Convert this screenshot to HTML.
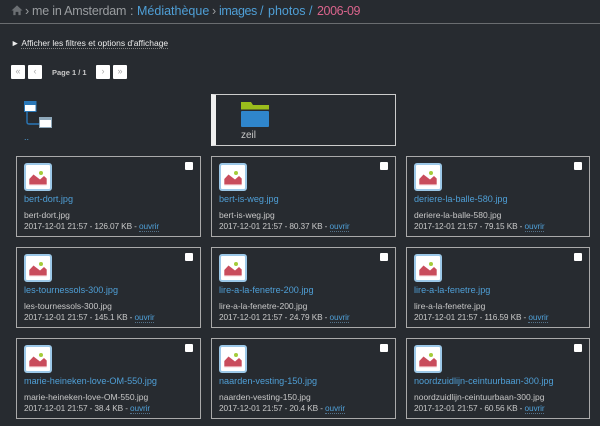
<!DOCTYPE html>
<html><head><meta charset="utf-8"><style>
html,body{margin:0;padding:0;background:#272b30;}
body{width:600px;height:426px;position:relative;overflow:hidden;font-family:"Liberation Sans",sans-serif;color:#c8c8c8;}
.a{position:absolute;white-space:nowrap;}
.h{top:1px;font-size:12.5px;line-height:20px;color:#9a9da0;}
.b{color:#4f9fd6;}
.card{position:absolute;width:183px;height:79px;border:1px solid #aaa;box-sizing:content-box;}
.card svg{position:absolute;left:7px;top:5.5px;}
.cb{position:absolute;left:168px;top:5px;width:8px;height:8px;background:#fff;border-radius:1px;}
.c3 .cb{left:167px;}
.c3{width:182px;}
.t{position:absolute;left:7px;top:36px;font-size:9.1px;line-height:12px;color:#4f9fd6;white-space:nowrap;}
.n{position:absolute;left:7px;top:52px;font-size:8.5px;line-height:12px;color:#c8c8c8;white-space:nowrap;}
.m{position:absolute;left:7px;top:63px;font-size:8.3px;letter-spacing:-.13px;line-height:12px;color:#c8c8c8;white-space:nowrap;}
.m u{color:#4f9fd6;text-decoration:none;border-bottom:1px dotted #55748c;}
.btn{position:absolute;top:65px;width:14px;height:14px;background:#fff;border-radius:1px;color:#aaa;font-size:9px;line-height:13px;text-align:center;}
</style></head><body>
<svg class="a" style="left:11px;top:4px" width="12" height="12" viewBox="0 0 13 12"><path d="M6.5 1L0.5 6.5H2.5V11.5H5V8H8V11.5H10.5V6.5H12.5Z" fill="#6b6f73"/></svg>
<div class="a h" style="left:25px">›</div>
<div class="a h" style="left:32px;letter-spacing:-.2px">me in Amsterdam</div>
<div class="a h" style="left:130px">:</div>
<div class="a h b" style="left:137px">Médiathèque</div>
<div class="a h" style="left:212px">›</div>
<div class="a h b" style="left:219px;letter-spacing:-.4px">images</div>
<div class="a h b" style="left:260px">/</div>
<div class="a h b" style="left:268px">photos</div>
<div class="a h b" style="left:309px">/</div>
<div class="a h" style="left:317px;color:#d9648c;letter-spacing:-.4px">2006-09</div>
<div class="a" style="left:0;top:23px;width:600px;height:1px;background:#6a6d70"></div>
<div class="a" style="left:11px;top:37px;font-size:8.5px;line-height:12px;color:#ececec">► <span style="border-bottom:1px dotted #888">Afficher les filtres et options d'affichage</span></div>
<div class="btn" style="left:11px">«</div><div class="btn" style="left:28px">‹</div>
<div class="a" style="left:52px;top:67px;font-size:7.5px;line-height:12px;font-weight:bold;color:#c8c8c8">Page 1 / 1</div>
<div class="btn" style="left:96px">›</div><div class="btn" style="left:113px">»</div>
<svg class="a" style="left:24px;top:100px" width="30" height="32" viewBox="0 0 30 32">
<path d="M3 12V22Q3 24 5 24H15" stroke="#2a78b8" stroke-width="1.4" fill="none"/>
<rect x="0" y="1" width="12.5" height="11" fill="#2a78b8"/><rect x="1" y="5" width="10.5" height="6" fill="#fff"/>
<rect x="15" y="17" width="13" height="11" fill="#8fa9bb"/><rect x="16" y="20" width="11" height="7" fill="#fff"/>
</svg>
<div class="a" style="left:24px;top:132px;font-size:9px;line-height:10px;color:#4f9fd6">..</div>
<div class="a" style="left:211px;top:94px;width:185px;height:52px;border:1px solid #ccc;border-left:5px solid #efefef;box-sizing:border-box"></div>
<svg class="a" style="left:241px;top:102px" width="28" height="26" viewBox="0 0 28 26"><path d="M0 0H10L12 3H28V7.5H0Z" fill="#9bbd1c"/><rect y="9" width="28" height="16" rx="1" fill="#2f86cc"/></svg>
<div class="a" style="left:241px;top:129px;font-size:10px;line-height:13px;color:#c8c8c8">zeil</div>
<div class="card" style="left:16px;top:156px"><svg width="28" height="28" viewBox="0 0 28 28"><rect x="1" y="1" width="26" height="26" rx="2" fill="#fff" stroke="#9cc8e8" stroke-width="2"/><circle cx="17" cy="10" r="2" fill="#a4cc3a"/><path d="M5.3 21V16L9.5 11.5L16 16.5L20 13L22.7 15.5V21Z" fill="#c94c5c"/><rect x="5.3" y="21" width="17.4" height="1.2" fill="#e8a0a8"/></svg><i class="cb"></i><div class="t">bert-dort.jpg</div><div class="n">bert-dort.jpg</div><div class="m">2017-12-01 21:57 - 126.07 KB - <u>ouvrir</u></div></div>
<div class="card" style="left:211px;top:156px"><svg width="28" height="28" viewBox="0 0 28 28"><rect x="1" y="1" width="26" height="26" rx="2" fill="#fff" stroke="#9cc8e8" stroke-width="2"/><circle cx="17" cy="10" r="2" fill="#a4cc3a"/><path d="M5.3 21V16L9.5 11.5L16 16.5L20 13L22.7 15.5V21Z" fill="#c94c5c"/><rect x="5.3" y="21" width="17.4" height="1.2" fill="#e8a0a8"/></svg><i class="cb"></i><div class="t">bert-is-weg.jpg</div><div class="n">bert-is-weg.jpg</div><div class="m">2017-12-01 21:57 - 80.37 KB - <u>ouvrir</u></div></div>
<div class="card c3" style="left:406px;top:156px"><svg width="28" height="28" viewBox="0 0 28 28"><rect x="1" y="1" width="26" height="26" rx="2" fill="#fff" stroke="#9cc8e8" stroke-width="2"/><circle cx="17" cy="10" r="2" fill="#a4cc3a"/><path d="M5.3 21V16L9.5 11.5L16 16.5L20 13L22.7 15.5V21Z" fill="#c94c5c"/><rect x="5.3" y="21" width="17.4" height="1.2" fill="#e8a0a8"/></svg><i class="cb"></i><div class="t">deriere-la-balle-580.jpg</div><div class="n">deriere-la-balle-580.jpg</div><div class="m">2017-12-01 21:57 - 79.15 KB - <u>ouvrir</u></div></div>
<div class="card" style="left:16px;top:247px"><svg width="28" height="28" viewBox="0 0 28 28"><rect x="1" y="1" width="26" height="26" rx="2" fill="#fff" stroke="#9cc8e8" stroke-width="2"/><circle cx="17" cy="10" r="2" fill="#a4cc3a"/><path d="M5.3 21V16L9.5 11.5L16 16.5L20 13L22.7 15.5V21Z" fill="#c94c5c"/><rect x="5.3" y="21" width="17.4" height="1.2" fill="#e8a0a8"/></svg><i class="cb"></i><div class="t">les-tournessols-300.jpg</div><div class="n">les-tournessols-300.jpg</div><div class="m">2017-12-01 21:57 - 145.1 KB - <u>ouvrir</u></div></div>
<div class="card" style="left:211px;top:247px"><svg width="28" height="28" viewBox="0 0 28 28"><rect x="1" y="1" width="26" height="26" rx="2" fill="#fff" stroke="#9cc8e8" stroke-width="2"/><circle cx="17" cy="10" r="2" fill="#a4cc3a"/><path d="M5.3 21V16L9.5 11.5L16 16.5L20 13L22.7 15.5V21Z" fill="#c94c5c"/><rect x="5.3" y="21" width="17.4" height="1.2" fill="#e8a0a8"/></svg><i class="cb"></i><div class="t">lire-a-la-fenetre-200.jpg</div><div class="n">lire-a-la-fenetre-200.jpg</div><div class="m">2017-12-01 21:57 - 24.79 KB - <u>ouvrir</u></div></div>
<div class="card c3" style="left:406px;top:247px"><svg width="28" height="28" viewBox="0 0 28 28"><rect x="1" y="1" width="26" height="26" rx="2" fill="#fff" stroke="#9cc8e8" stroke-width="2"/><circle cx="17" cy="10" r="2" fill="#a4cc3a"/><path d="M5.3 21V16L9.5 11.5L16 16.5L20 13L22.7 15.5V21Z" fill="#c94c5c"/><rect x="5.3" y="21" width="17.4" height="1.2" fill="#e8a0a8"/></svg><i class="cb"></i><div class="t">lire-a-la-fenetre.jpg</div><div class="n">lire-a-la-fenetre.jpg</div><div class="m">2017-12-01 21:57 - 116.59 KB - <u>ouvrir</u></div></div>
<div class="card" style="left:16px;top:338px"><svg width="28" height="28" viewBox="0 0 28 28"><rect x="1" y="1" width="26" height="26" rx="2" fill="#fff" stroke="#9cc8e8" stroke-width="2"/><circle cx="17" cy="10" r="2" fill="#a4cc3a"/><path d="M5.3 21V16L9.5 11.5L16 16.5L20 13L22.7 15.5V21Z" fill="#c94c5c"/><rect x="5.3" y="21" width="17.4" height="1.2" fill="#e8a0a8"/></svg><i class="cb"></i><div class="t">marie-heineken-love-OM-550.jpg</div><div class="n">marie-heineken-love-OM-550.jpg</div><div class="m">2017-12-01 21:57 - 38.4 KB - <u>ouvrir</u></div></div>
<div class="card" style="left:211px;top:338px"><svg width="28" height="28" viewBox="0 0 28 28"><rect x="1" y="1" width="26" height="26" rx="2" fill="#fff" stroke="#9cc8e8" stroke-width="2"/><circle cx="17" cy="10" r="2" fill="#a4cc3a"/><path d="M5.3 21V16L9.5 11.5L16 16.5L20 13L22.7 15.5V21Z" fill="#c94c5c"/><rect x="5.3" y="21" width="17.4" height="1.2" fill="#e8a0a8"/></svg><i class="cb"></i><div class="t">naarden-vesting-150.jpg</div><div class="n">naarden-vesting-150.jpg</div><div class="m">2017-12-01 21:57 - 20.4 KB - <u>ouvrir</u></div></div>
<div class="card c3" style="left:406px;top:338px"><svg width="28" height="28" viewBox="0 0 28 28"><rect x="1" y="1" width="26" height="26" rx="2" fill="#fff" stroke="#9cc8e8" stroke-width="2"/><circle cx="17" cy="10" r="2" fill="#a4cc3a"/><path d="M5.3 21V16L9.5 11.5L16 16.5L20 13L22.7 15.5V21Z" fill="#c94c5c"/><rect x="5.3" y="21" width="17.4" height="1.2" fill="#e8a0a8"/></svg><i class="cb"></i><div class="t">noordzuidlijn-ceintuurbaan-300.jpg</div><div class="n">noordzuidlijn-ceintuurbaan-300.jpg</div><div class="m">2017-12-01 21:57 - 60.56 KB - <u>ouvrir</u></div></div>
</body></html>
